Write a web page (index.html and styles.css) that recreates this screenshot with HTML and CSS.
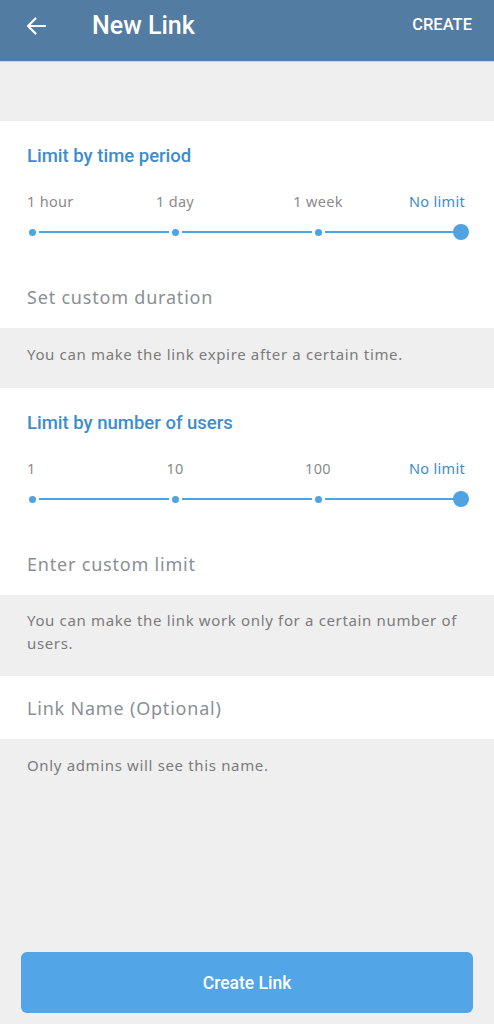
FILE: index.html
```html
<!DOCTYPE html>
<html>
<head>
<meta charset="utf-8">
<link rel="stylesheet" href="styles.css">
</head>
<body>
<div class="app">
  <header class="topbar">
    <svg class="back" width="24" height="24" viewBox="0 0 24 24"><path d="M21 12H4.5M11.5 4.5L4 12l7.5 7.5" fill="none" stroke="#fff" stroke-width="2.2" stroke-linecap="round" stroke-linejoin="round"/></svg>
    <h1 class="title">New Link</h1>
    <span class="action">CREATE</span>
  </header>
  <div class="spacer"></div>

  <section class="card">
    <h2 class="card-title">Limit by time period</h2>
    <div class="labels">
      <span class="lab first">1 hour</span>
      <span class="lab mid">1 day</span>
      <span class="lab mid">1 week</span>
      <span class="lab last active">No limit</span>
    </div>
    <div class="track">
      <div class="seg"><span class="dot"></span><span class="line"></span></div>
      <div class="seg"><span class="dot"></span><span class="line"></span></div>
      <div class="seg"><span class="dot"></span><span class="line"></span></div>
      <span class="knob"></span>
    </div>
    <div class="field">Set custom duration</div>
  </section>
  <p class="hint">You can make the link expire after a certain time.</p>

  <section class="card">
    <h2 class="card-title">Limit by number of users</h2>
    <div class="labels">
      <span class="lab first">1</span>
      <span class="lab mid">10</span>
      <span class="lab mid">100</span>
      <span class="lab last active">No limit</span>
    </div>
    <div class="track">
      <div class="seg"><span class="dot"></span><span class="line"></span></div>
      <div class="seg"><span class="dot"></span><span class="line"></span></div>
      <div class="seg"><span class="dot"></span><span class="line"></span></div>
      <span class="knob"></span>
    </div>
    <div class="field">Enter custom limit</div>
  </section>
  <p class="hint two">You can make the link work only for a certain number of users.</p>

  <section class="card plain">
    <div class="field single">Link Name (Optional)</div>
  </section>
  <p class="hint">Only admins will see this name.</p>

  <div class="grow"></div>
  <div class="footer">
    <button class="btn">Create Link</button>
  </div>
</div>
</body>
</html>
```

FILE: styles.css
```css
* { box-sizing: border-box; }
html, body { margin: 0; padding: 0; }
body { background: #efefef; font-family: "Noto Sans", sans-serif; }
.app { width: 494px; height: 1024px; display: flex; flex-direction: column; background: #efefef; overflow: hidden; }

.topbar { height: 61px; background: #527ca2; display: flex; align-items: center; padding: 0 22px 10px 24px; box-shadow: 0 1px 1px rgba(0,0,0,0.12); flex-shrink: 0; }
.back { display: block; }
.title { margin: 0 0 0 44px; font-family: Roboto, sans-serif; font-weight: 500; font-size: 25px; color: #fff; flex: 1; line-height: 1; }
.action { font-family: Roboto, sans-serif; font-weight: 500; font-size: 16.5px; color: #fff; margin-top: -3px; }

.spacer { height: 60px; flex-shrink: 0; }

.card { background: #fff; padding: 25px 0 0 27px; flex-shrink: 0; }
.card-title { margin: 0; font-family: Roboto, sans-serif; font-weight: 500; font-size: 18.5px; color: #3d8dcc; line-height: 20px; }
.labels { display: flex; margin-top: 25px; height: 20px; width: 440px; }
.lab { font-size: 14.5px; color: #8a8a8a; line-height: 20px; letter-spacing: 0.3px; }
.lab.active { color: #3d8dcc; }
.labels .first { width: 0; white-space: nowrap; }
.labels .mid { width: 0; display: flex; justify-content: center; white-space: nowrap; }
.labels .mid:nth-child(2) { margin-left: 148px; }
.labels .mid:nth-child(3) { margin-left: 143px; }
.labels .last { margin-left: auto; margin-right: 2px; }

.track { display: flex; align-items: center; margin: 13px 0 0 1.5px; height: 16px; }
.seg { width: 143px; display: flex; align-items: center; flex-shrink: 0; }
.dot { width: 7px; height: 7px; border-radius: 50%; background: #4ea3e0; flex-shrink: 0; }
.line { flex: 1; height: 2.5px; background: #4ea3e0; margin: 0 3px; }
.knob { width: 16px; height: 16px; border-radius: 50%; background: #4ea3e0; margin-left: -4.5px; flex-shrink: 0; }

.field { font-size: 18px; letter-spacing: 0.8px; color: #8a8f94; height: 88px; display: flex; align-items: center; padding-top: 26px; }
.field.single { height: 63px; padding-top: 0; }
.card.plain { padding-top: 0; }

.hint { margin: 0; padding: 15px 27px 0 27px; font-size: 15px; letter-spacing: 0.65px; color: #7b7b7b; line-height: 23px; height: 60px; flex-shrink: 0; }
.hint.two { height: 81px; padding-top: 14px; }

.grow { flex: 1; }
.footer { padding: 0 21px 11px 21px; }
.btn { width: 100%; height: 61px; border: none; border-radius: 6px; background: #52a5e6; color: #fff; font-family: Roboto, sans-serif; font-weight: 500; font-size: 17.5px; display: block; }
```
